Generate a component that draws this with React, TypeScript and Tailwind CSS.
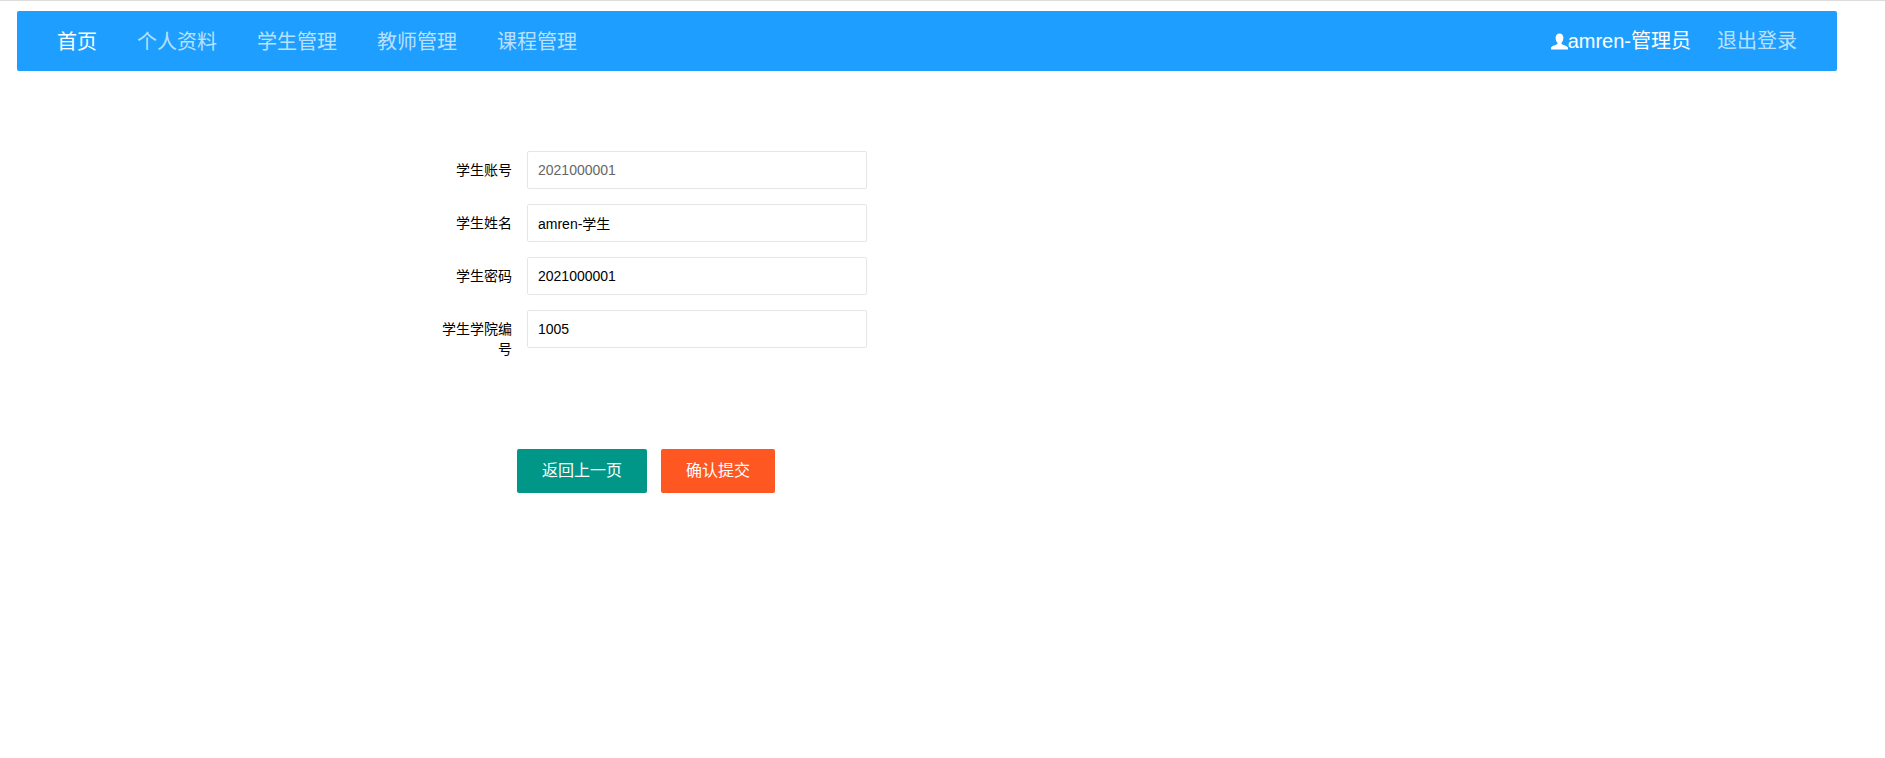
import React from 'react';

const font = { fontFamily: '"Liberation Sans", "Noto Sans CJK SC", sans-serif' };

const fields = [
  { label: '学生账号', value: '2021000001', disabled: true },
  { label: '学生姓名', value: 'amren-学生' },
  { label: '学生密码', value: '2021000001' },
  { label: '学生学院编号', value: '1005' },
];

const NavLink = ({ children, active }: { children: React.ReactNode; active?: boolean }) => (
  <a className={`block leading-[60px] pt-[1px] text-[20px] px-[20px] ${active ? 'text-white' : 'text-white/70'}`}>{children}</a>
);

export default function App() {
  return (
    <div className="min-h-[758px] bg-white text-black" style={font}>
      <div className="h-px bg-[#dcdcdc]" />
      <div className="pl-[17px] pt-[10px]">
        <nav className="w-[1820px] h-[60px] bg-[#1e9fff] rounded-[2px] flex justify-between pl-[20px] pr-[40px]">
          <div className="flex">
            <NavLink active>首页</NavLink>
            <NavLink>个人资料</NavLink>
            <NavLink>学生管理</NavLink>
            <NavLink>教师管理</NavLink>
            <NavLink>课程管理</NavLink>
          </div>
          <div className="flex items-center gap-[26px] text-[20px] leading-[60px]">
            <span className="flex items-center text-white">
              <svg viewBox="0 0 17 17" className="w-[17px] h-[17px]" fill="currentColor">
                <path d="M8.5 0.5c2.5 0 3.9 1.9 3.9 4.4 0 1.8-.7 3.6-1.7 4.6-.3.3-.3 1 0 1.4.7.9 6.3 2 6.3 4.1v1.5H0v-1.5c0-2.1 5.600-3.200 6.300-4.100.3-.4.3-1.100 0-1.400-1-1-1.700-2.800-1.700-4.600 0-2.500 1.400-4.400 3.900-4.400z" />
              </svg>
              amren-管理员
            </span>
            <a className="text-white/70">退出登录</a>
          </div>
        </nav>
      </div>

      <form className="mt-[80px] ml-[417px] w-[450px] flex flex-col gap-[15px]">
        {fields.map((f) => (
          <div key={f.label} className="flex items-start">
            <label className="w-[110px] shrink-0 pt-[9px] pl-[15px] pr-[15px] text-right text-[14px] leading-[20px] text-black">
              {f.label}
            </label>
            <input
              readOnly
              value={f.value}
              className={`w-[340px] h-[38px] border border-[#e6e6e6] rounded-[2px] pl-[10px] text-[14px] outline-none bg-white ${
                f.disabled ? 'text-[#666666]' : 'text-black'
              }`}
            />
          </div>
        ))}
      </form>

      <div className="mt-[90px] ml-[517px] flex gap-[14px]">
        <button className="h-[44px] w-[130px] rounded-[2px] bg-[#009688] text-white text-[16px]">返回上一页</button>
        <button className="h-[44px] w-[114px] rounded-[2px] bg-[#ff5722] text-white text-[16px]">确认提交</button>
      </div>
    </div>
  );
}
